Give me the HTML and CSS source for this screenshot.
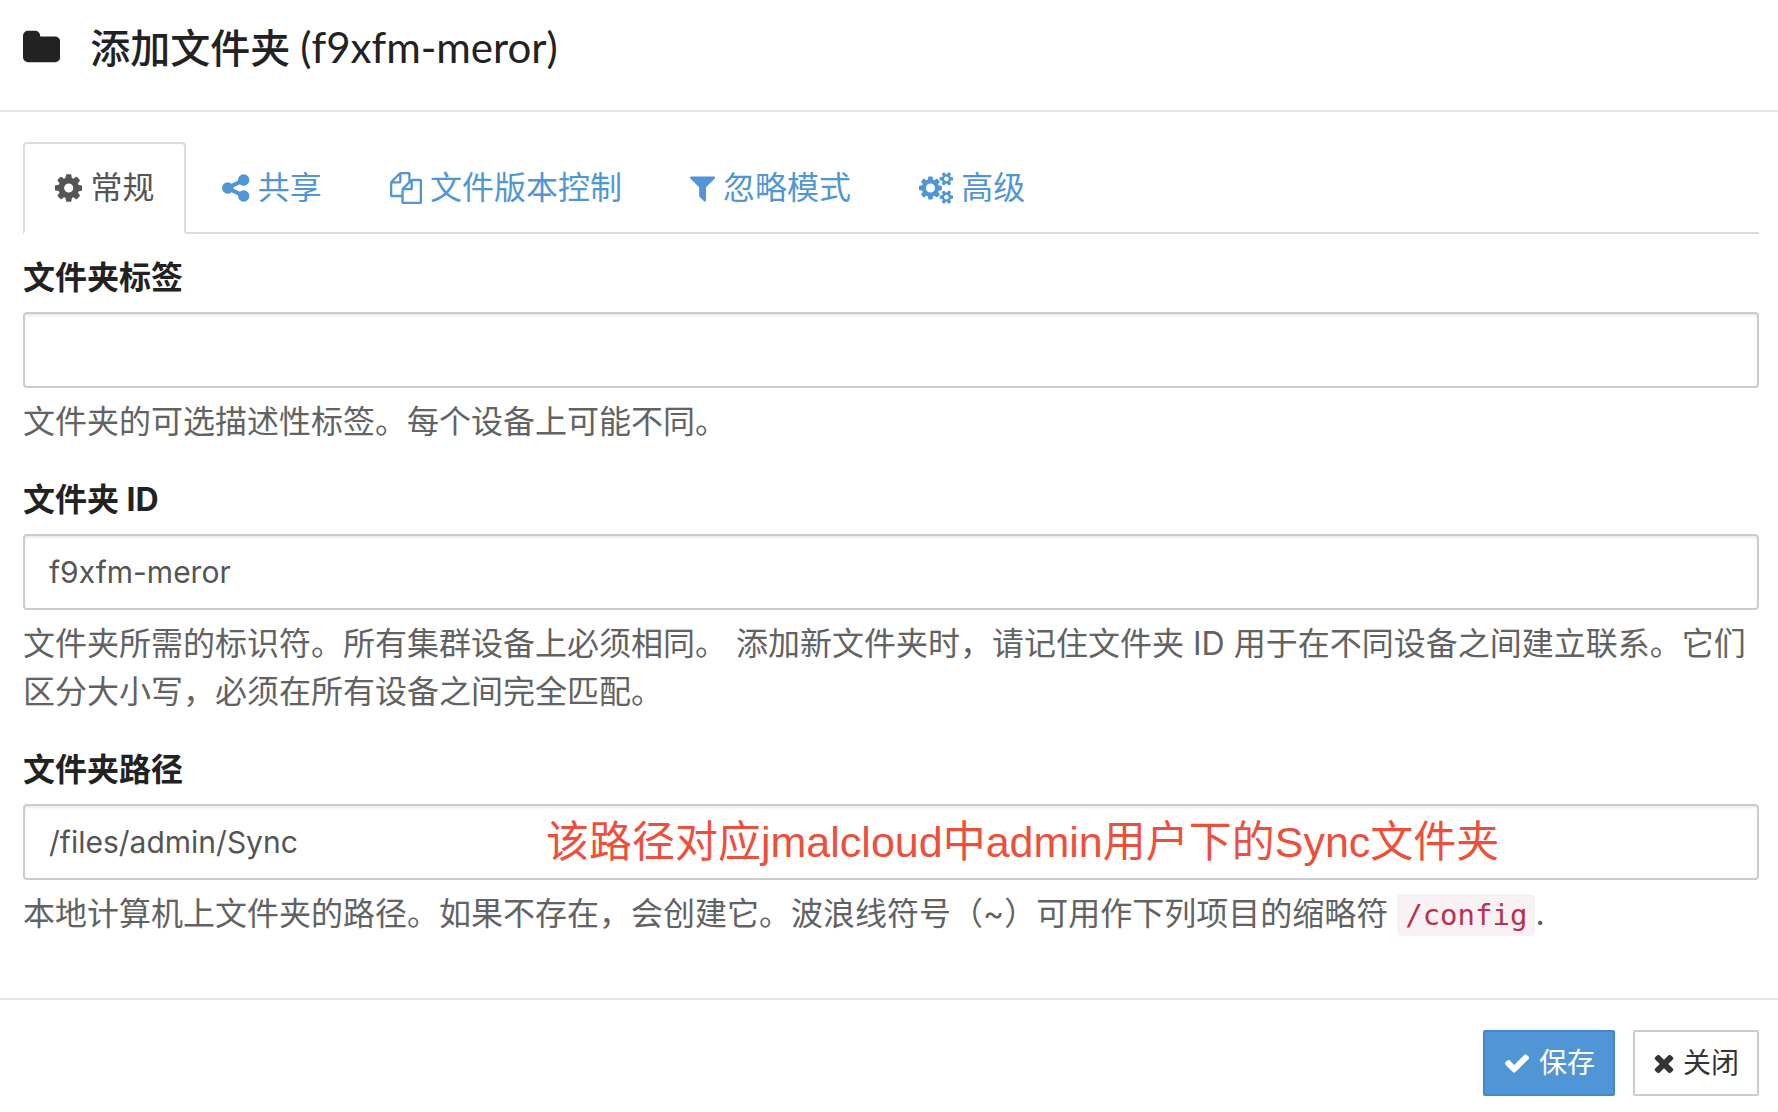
FILE: index.html
```html
<!DOCTYPE html>
<html lang="zh-CN">
<head>
<meta charset="utf-8">
<meta name="viewport" content="width=device-width, initial-scale=1">
<title>添加文件夹 (f9xfm-meror)</title>
<link rel="stylesheet" href="styles.css">
</head>
<body>
<form class="dialog">
  <header class="dialog-header">
    <svg class="icon icon-folder" viewBox="0 -1536 1664 1792" aria-hidden="true"><path transform="scale(1,-1)" d="M1664 928v-704q0 -92 -66 -158t-158 -66h-1216q-92 0 -158 66t-66 158v960q0 92 66 158t158 66h320q92 0 158 -66t66 -158v-32h672q92 0 158 -66t66 -158z"/></svg>
    <h1 class="dialog-title">添加文件夹 <span class="dialog-id">(f9xfm-meror)</span></h1>
  </header>

  <main class="dialog-body">
    <nav class="tabs">
      <a class="tab tab-active" href="#general">
        <svg class="icon" viewBox="0 -1536 1536 1792" aria-hidden="true"><path transform="scale(1,-1)" d="M1024 640q0 106 -75 181t-181 75t-181 -75t-75 -181t75 -181t181 -75t181 75t75 181zM1536 749v-222q0 -12 -8 -23t-20 -13l-185 -28q-19 -54 -39 -91q35 -50 107 -138q10 -12 10 -25t-9 -23q-27 -37 -99 -108t-94 -71q-12 0 -26 9l-138 108q-44 -23 -91 -38q-16 -136 -29 -186q-7 -28 -36 -28h-222q-14 0 -24.5 8.5t-11.5 21.5l-28 184q-49 16 -90 37l-141 -107q-10 -9 -25 -9q-14 0 -25 11q-126 114 -165 168q-7 10 -7 23q0 12 8 23q15 21 51 66.5t54 70.5q-27 50 -41 99l-183 27q-13 2 -21 12.5t-8 23.5v222q0 12 8 23t19 13l186 28q14 46 39 92q-40 57 -107 138q-10 12 -10 24q0 10 9 23q26 36 98.5 107.5t94.5 71.5q13 0 26 -10l138 -107q44 23 91 38q16 136 29 186q7 28 36 28h222q14 0 24.5 -8.5t11.5 -21.5l28 -184q49 -16 90 -37l142 107q9 9 24 9q13 0 25 -10q129 -119 165 -170q7 -8 7 -22q0 -12 -8 -23q-15 -21 -51 -66.5t-54 -70.5q26 -50 41 -98l183 -28q13 -2 21 -12.5t8 -23.5z"/></svg>
        <span>常规</span>
      </a>
      <a class="tab" href="#sharing">
        <svg class="icon" viewBox="0 -1536 1536 1792" aria-hidden="true"><path transform="scale(1,-1)" d="M1216 512q133 0 226.5 -93.5t93.5 -226.5t-93.5 -226.5t-226.5 -93.5t-226.5 93.5t-93.5 226.5q0 12 2 34l-360 180q-92 -86 -218 -86q-133 0 -226.5 93.5t-93.5 226.5t93.5 226.5t226.5 93.5q126 0 218 -86l360 180q-2 22 -2 34q0 133 93.5 226.5t226.5 93.5t226.5 -93.5t93.5 -226.5t-93.5 -226.5t-226.5 -93.5q-126 0 -218 86l-360 -180q2 -22 2 -34t-2 -34l360 -180q92 86 218 86z"/></svg>
        <span>共享</span>
      </a>
      <a class="tab" href="#versioning">
        <svg class="icon" viewBox="0 -1536 1792 1792" aria-hidden="true"><path transform="scale(1,-1)" d="M1696 1152q40 0 68 -28t28 -68v-1216q0 -40 -28 -68t-68 -28h-960q-40 0 -68 28t-28 68v288h-544q-40 0 -68 28t-28 68v672q0 40 20 88t48 76l408 408q28 28 76 48t88 20h416q40 0 68 -28t28 -68v-328q68 40 128 40h416zM1152 939l-299 -299h299v299zM512 1323l-299 -299h299v299zM708 676l316 316v416h-384v-416q0 -40 -28 -68t-68 -28h-416v-640h512v256q0 40 20 88t48 76zM1664 -128v1152h-384v-416q0 -40 -28 -68t-68 -28h-416v-640h896z"/></svg>
        <span>文件版本控制</span>
      </a>
      <a class="tab" href="#ignores">
        <svg class="icon" viewBox="0 -1536 1408 1792" aria-hidden="true"><path transform="scale(1,-1)" d="M1403 1241q17 -41 -14 -70l-493 -493v-742q0 -42 -39 -59q-13 -5 -25 -5q-27 0 -45 19l-256 256q-19 19 -19 45v486l-493 493q-31 29 -14 70q17 39 59 39h1280q42 0 59 -39z"/></svg>
        <span>忽略模式</span>
      </a>
      <a class="tab" href="#advanced">
        <svg class="icon" viewBox="0 -1536 1920 1792" aria-hidden="true"><path transform="scale(1,-1)" d="M896 640q0 106 -75 181t-181 75t-181 -75t-75 -181t75 -181t181 -75t181 75t75 181zM1664 128q0 52 -38 90t-90 38t-90 -38t-38 -90q0 -53 37.5 -90.5t90.5 -37.5t90.5 37.5t37.5 90.5zM1664 1152q0 52 -38 90t-90 38t-90 -38t-38 -90q0 -53 37.5 -90.5t90.5 -37.5t90.5 37.5t37.5 90.5zM1280 731v-185q0 -10 -7 -19.5t-16 -10.5l-155 -24q-11 -35 -32 -76q34 -48 90 -115q7 -11 7 -20q0 -12 -7 -19q-23 -30 -82.5 -89.5t-78.5 -59.5q-11 0 -21 7l-115 90q-37 -19 -77 -31q-11 -108 -23 -155q-7 -24 -30 -24h-186q-11 0 -20 7.5t-10 17.5l-23 153q-34 10 -75 31l-118 -89q-7 -7 -20 -7q-11 0 -21 8q-144 133 -144 160q0 9 7 19q10 14 41 53t47 61q-23 44 -35 82l-152 24q-10 1 -17 9.5t-7 19.5v185q0 10 7 19.5t16 10.5l155 24q11 35 32 76q-34 48 -90 115q-7 11 -7 20q0 12 7 20q22 30 82 89t79 59q11 0 21 -7l115 -90q34 18 77 32q11 108 23 154q7 24 30 24h186q11 0 20 -7.5t10 -17.5l23 -153q34 -10 75 -31l118 89q8 7 20 7q11 0 21 -8q144 -133 144 -160q0 -8 -7 -19q-12 -16 -42 -54t-45 -60q23 -48 34 -82l152 -23q10 -2 17 -10.5t7 -19.5zM1920 198v-140q0 -16 -149 -31q-12 -27 -30 -52q51 -113 51 -138q0 -4 -4 -7q-122 -71 -124 -71q-8 0 -46 47t-52 68q-20 -2 -30 -2t-30 2q-14 -21 -52 -68t-46 -47q-2 0 -124 71q-4 3 -4 7q0 25 51 138q-18 25 -30 52q-149 15 -149 31v140q0 16 149 31q13 29 30 52q-51 113 -51 138q0 4 4 7q4 2 35 20t59 34t30 16q8 0 46 -46.5t52 -67.5q20 2 30 2t30 -2q51 71 92 112l6 2q4 0 124 -70q4 -3 4 -7q0 -25 -51 -138q17 -23 30 -52q149 -15 149 -31zM1920 1222v-140q0 -16 -149 -31q-12 -27 -30 -52q51 -113 51 -138q0 -4 -4 -7q-122 -71 -124 -71q-8 0 -46 47t-52 68q-20 -2 -30 -2t-30 2q-14 -21 -52 -68t-46 -47q-2 0 -124 71q-4 3 -4 7q0 25 51 138q-18 25 -30 52q-149 15 -149 31v140q0 16 149 31q13 29 30 52q-51 113 -51 138q0 4 4 7q4 2 35 20t59 34t30 16q8 0 46 -46.5t52 -67.5q20 2 30 2t30 -2q51 71 92 112l6 2q4 0 124 -70q4 -3 4 -7q0 -25 -51 -138q17 -23 30 -52q149 -15 149 -31z"/></svg>
        <span>高级</span>
      </a>
    </nav>

    <section class="fields" id="general">
      <div class="field">
        <label class="field-label" for="folder-label">文件夹标签</label>
        <input class="field-input" id="folder-label" type="text" value="">
        <p class="field-help">文件夹的可选描述性标签。每个设备上可能不同。</p>
      </div>
      <div class="field">
        <label class="field-label" for="folder-id">文件夹 ID</label>
        <input class="field-input" id="folder-id" type="text" value="f9xfm-meror">
        <p class="field-help">文件夹所需的标识符。所有集群设备上必须相同。 添加新文件夹时，请记住文件夹 ID 用于在不同设备之间建立联系。它们区分大小写，必须在所有设备之间完全匹配。</p>
      </div>
      <div class="field">
        <label class="field-label" for="folder-path">文件夹路径</label>
        <div class="field-control">
          <input class="field-input" id="folder-path" type="text" value="/files/admin/Sync">
          <span class="annotation">该路径对应jmalcloud中admin用户下的Sync文件夹</span>
        </div>
        <p class="field-help">本地计算机上文件夹的路径。如果不存在，会创建它。波浪线符号（~）可用作下列项目的缩略符 <code class="code">/config</code>.</p>
      </div>
    </section>
  </main>

  <footer class="dialog-footer">
    <button class="btn btn-primary" type="submit">
      <svg class="icon" viewBox="0 -1536 1792 1792" aria-hidden="true"><path transform="scale(1,-1)" d="M1671 970q0 -40 -28 -68l-724 -724l-136 -136q-28 -28 -68 -28t-68 28l-136 136l-362 362q-28 28 -28 68t28 68l136 136q28 28 68 28t68 -28l294 -295l656 657q28 28 68 28t68 -28l136 -136q28 -28 28 -68z"/></svg>
      <span>保存</span>
    </button>
    <button class="btn" type="button">
      <svg class="icon" viewBox="0 -1536 1408 1792" aria-hidden="true"><path transform="scale(1,-1)" d="M1298 214q0 -40 -28 -68l-136 -136q-28 -28 -68 -28t-68 28l-294 294l-294 -294q-28 -28 -68 -28t-68 28l-136 136q-28 28 -28 68t28 68l294 294l-294 294q-28 28 -28 68t28 68l136 136q28 28 68 28t68 -28l294 -294l294 294q28 28 68 28t68 -28l136 -136q28 -28 28 -68t-28 -68l-294 -294l294 -294q28 -28 28 -68z"/></svg>
      <span>关闭</span>
    </button>
  </footer>
</form>
</body>
</html>
```
FILE: styles.css
```css
* {
  box-sizing: border-box;
}

body {
  margin: 0;
  background: #fff;
  color: #222;
  font-family: Inter, "Noto Sans CJK SC", sans-serif;
  font-size: 32px;
  line-height: 48px;
}

.icon {
  display: block;
  flex: none;
  width: auto;
  height: 1em;
  fill: currentColor;
}

.dialog-header {
  display: flex;
  align-items: center;
  gap: 30px;
  padding: 24px 19px 38px 23px;
  border-bottom: 2px solid #e5e5e5;
  font-size: 40px;
}

.dialog-title {
  margin: 0;
  font-family: Lato, "Noto Sans CJK SC", sans-serif;
  font-size: 40px;
  font-weight: 500;
  line-height: 48px;
}

.dialog-id {
  font-size: 42px;
  font-weight: 400;
  line-height: 1;
}

.dialog-body {
  padding: 30px 19px 30px 23px;
}

.tabs {
  display: flex;
  gap: 4px;
  border-bottom: 2px solid #ddd;
}

.tab {
  display: flex;
  align-items: center;
  gap: 8px;
  margin-bottom: -2px;
  padding: 20px 30px;
  border: 2px solid transparent;
  border-radius: 4px 4px 0 0;
  color: #5096d6;
  text-decoration: none;
}

.tab-active {
  border-color: #ddd #ddd #fff;
  background: #fff;
  color: #555;
}

.fields {
  padding-top: 20px;
}

.field {
  margin-bottom: 30px;
}

.field-label {
  display: block;
  margin-bottom: 10px;
  font-weight: 700;
}

.field-control {
  position: relative;
}

.field-input {
  display: block;
  width: 100%;
  height: 76px;
  padding: 0 24px;
  border: 2px solid #ccc;
  border-radius: 4px;
  background: #fff;
  box-shadow: inset 0 2px 2px rgba(0, 0, 0, 0.08);
  color: #555;
  font: inherit;
  font-size: 30px;
}

.annotation {
  position: absolute;
  top: 14px;
  left: 523px;
  color: #ee4f3b;
  font-family: "Liberation Sans", "Noto Sans CJK SC", sans-serif;
  font-size: 43px;
  line-height: 48px;
  white-space: nowrap;
  pointer-events: none;
}

.field-help {
  margin: 10px 0 0;
  color: #626262;
}

.code {
  padding: 4px 8px;
  border-radius: 4px;
  background: #f9f2f4;
  color: #b9314f;
  font-family: "DejaVu Sans Mono", monospace;
  font-size: 29px;
  line-height: 1;
}

.dialog-footer {
  display: flex;
  justify-content: flex-end;
  gap: 18px;
  padding: 30px 19px 16px;
  border-top: 2px solid #e5e5e5;
}

.btn {
  display: flex;
  align-items: center;
  gap: 8px;
  padding: 10px 18px;
  border: 2px solid #ccc;
  border-radius: 2px;
  background: #fff;
  color: #333;
  font: inherit;
  font-size: 28px;
  line-height: 42px;
}

.btn-primary {
  border-color: #4088cf;
  background: #5096d6;
  color: #fff;
}
```
